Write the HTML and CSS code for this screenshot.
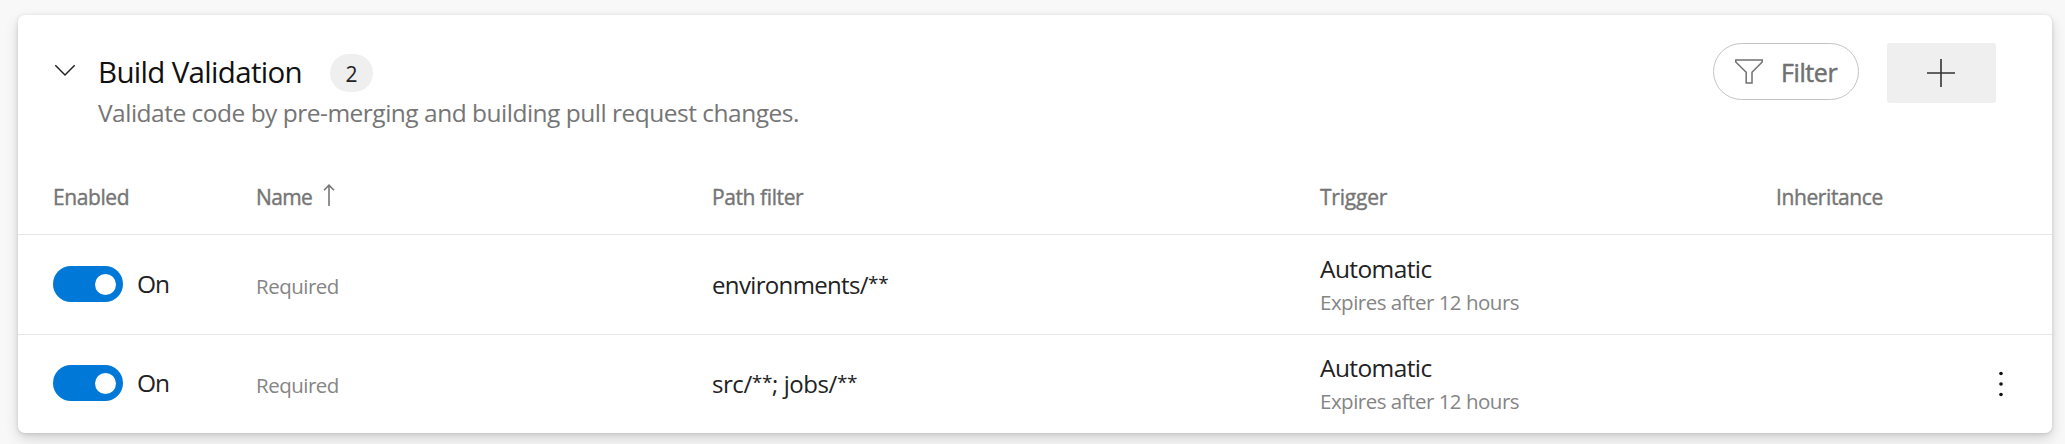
FILE: index.html
```html
<!DOCTYPE html>
<html lang="en">
<head>
<meta charset="utf-8">
<title>Build Validation</title>
<link rel="stylesheet" href="styles.css">
</head>
<body>
<section class="card">
  <header class="card-header">
    <svg class="chevron" width="22" height="14" viewBox="0 0 22 14"><path d="M1.300 1.300 11 11 20.700 1.300" fill="none" stroke="#222" stroke-width="1.500"/></svg>
    <div class="heading">
      <div class="title-row"><h2 class="title">Build Validation</h2><span class="count">2</span></div>
      <p class="desc">Validate code by pre-merging and building pull request changes.</p>
    </div>
    <button class="filter">
      <svg width="28" height="25" viewBox="0 0 28 25"><path d="M.8 .9H27.200V3L17 13.200V24H11.200V13.200L.8 3Z" fill="none" stroke="#707070" stroke-width="1.500"/></svg>
      <span class="filter-label">Filter</span>
    </button>
    <button class="add" aria-label="Add">
      <svg width="28" height="28" viewBox="0 0 28 28"><path d="M14 0V28M0 14H28" stroke="#333" stroke-width="1.600"/></svg>
    </button>
  </header>
  <div class="row thead">
    <span class="th">Enabled</span>
    <span class="sort"><span class="th th-name">Name</span><svg width="12" height="22" viewBox="0 0 12 22"><path d="M6 22V1.500M1 6.300 6 1.200 11 6.300" fill="none" stroke="#777" stroke-width="1.600"/></svg></span>
    <span class="th">Path filter</span>
    <span class="th th-trigger">Trigger</span>
    <span class="th">Inheritance</span>
  </div>
  <div class="row item">
    <div class="switch"><span class="toggle"><span class="knob"></span></span><span class="on">On</span></div>
    <span class="name">Required</span>
    <span class="path path-env">environments/<span class="glob">**</span></span>
    <div class="trigger"><div class="auto">Automatic</div><div class="expires">Expires after 12 hours</div></div>
  </div>
  <div class="row item last">
    <div class="switch"><span class="toggle"><span class="knob"></span></span><span class="on">On</span></div>
    <span class="name">Required</span>
    <span class="path path-src">src/<span class="glob">**</span>; jobs/<span class="glob">**</span></span>
    <div class="trigger"><div class="auto">Automatic</div><div class="expires">Expires after 12 hours</div></div>
    <div class="more"><svg width="4" height="26" viewBox="0 0 4 26"><g fill="#111"><circle cx="2" cy="2.500" r="1.800"/><circle cx="2" cy="13" r="1.800"/><circle cx="2" cy="23.500" r="1.800"/></g></svg></div>
  </div>
</section>
</body>
</html>
```

FILE: styles.css
```css
* { box-sizing: border-box; }
body {
  margin: 0;
  padding: 15px 13px 11px 18px;
  height: 444px;
  overflow: hidden;
  background: #f8f8f8;
  font-family: "Open Sans", "Noto Sans", sans-serif;
  color: #222;
}
svg { display: block; flex: none; }
.card {
  height: 418px;
  background: #fff;
  border-radius: 7px;
  box-shadow: 0 6px 14px rgba(0, 0, 0, .14), 0 1px 4px rgba(0, 0, 0, .13);
}
.card-header {
  display: flex;
  align-items: flex-start;
  height: 139px;
  padding: 28px 56px 0 36px;
}
.chevron { margin-top: 21px; }
.heading { flex: 1; margin-left: 22px; padding-top: 9px; }
.title-row { display: flex; align-items: center; height: 40px; }
.title {
  margin: 0;
  font-size: 29.5px;
  font-weight: 400;
  line-height: 40px;
  letter-spacing: -.68px;
  color: #111;
  white-space: nowrap;
  width: 232px;
}
.count {
  width: 43px;
  height: 38px;
  margin-top: 2px;
  border-radius: 19px;
  background: #efefef;
  font-size: 21px;
  line-height: 40px;
  text-align: center;
}
.desc {
  margin: 5px 0 0;
  font-size: 24.5px;
  line-height: 32px;
  letter-spacing: -.5px;
  color: #757575;
  white-space: nowrap;
}
button { border: 0; margin: 0; padding: 0; font-family: inherit; }
.filter {
  display: flex;
  align-items: center;
  width: 146px;
  height: 57px;
  padding: 0 0 0 21px;
  border: 1px solid #c4c4c4;
  border-radius: 28.5px;
  background: #fff;
  color: #707070;
}
.filter-label {
  margin-left: 18px;
  font-size: 25px;
  line-height: 34px;
  letter-spacing: -.4px;
  -webkit-text-stroke: .5px #707070;
}
.filter svg { margin-bottom: 1px; }
.add {
  display: flex;
  align-items: center;
  justify-content: center;
  width: 109px;
  height: 60px;
  margin-left: 28px;
  padding-right: 2px;
  border-radius: 3px;
  background: #efefef;
}
.row {
  display: grid;
  grid-template-columns: 203px 456px 608px 456px 1fr;
  align-items: center;
  padding-left: 35px;
  border-bottom: 1px solid #e6e6e6;
  white-space: nowrap;
}
.thead { height: 81px; padding-top: 5px; color: #757575; }
.th {
  font-size: 21px;
  line-height: 30px;
  letter-spacing: -.4px;
  -webkit-text-stroke: .4px #757575;
}
.th-trigger { letter-spacing: -.2px; }
.sort { display: flex; align-items: center; gap: 11px; }
.sort svg { margin-bottom: 4px; }
.th-name { width: 56px; letter-spacing: -.6px; }
.item { height: 100px; padding-bottom: 1px; }
.last { height: 98px; border-bottom: 0; }
.switch { display: flex; align-items: center; }
.last .switch { margin-top: -1px; }
.toggle {
  display: flex;
  align-items: center;
  justify-content: flex-end;
  width: 70px;
  height: 36px;
  padding-right: 7px;
  border-radius: 18px;
  background: #0078d7;
}
.knob { width: 21px; height: 21px; border-radius: 50%; background: #fff; }
.on { margin-left: 14px; font-size: 24.5px; line-height: 34px; letter-spacing: -1px; }
.name { padding-top: 3px; font-size: 20.5px; line-height: 30px; letter-spacing: -.5px; color: #858585; }
.path { padding-top: 2px; font-size: 24px; line-height: 34px; }
.last .path { padding-top: 0; }
.path-env { letter-spacing: -.65px; }
.path-src { letter-spacing: -.45px; }
.glob { font-size: 19px; line-height: 0; letter-spacing: -.3px; vertical-align: 4px; }
.trigger { padding-top: 2px; }
.auto { font-size: 24.5px; line-height: 33px; letter-spacing: -.6px; }
.expires { font-size: 20.5px; line-height: 34px; letter-spacing: -.5px; color: #858585; }
.more { grid-column: 5; display: flex; justify-content: flex-end; padding-right: 49px; }
```
